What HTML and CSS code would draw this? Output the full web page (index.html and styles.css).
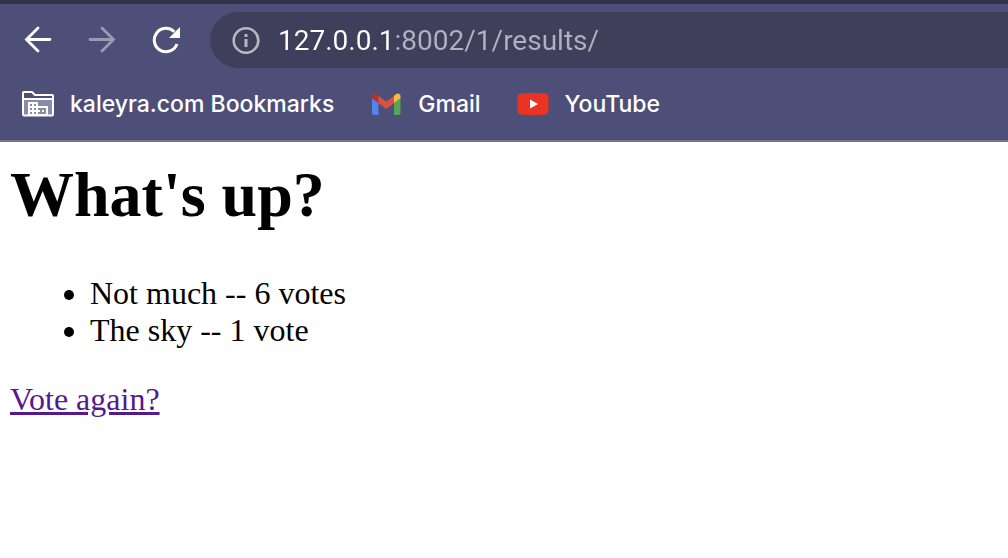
FILE: index.html
```html
<!DOCTYPE html>
<html lang="en">
<head>
<meta charset="utf-8">
<meta name="viewport" content="width=device-width, initial-scale=1">
<title>What's up?</title>
<link rel="stylesheet" href="styles.css">
</head>
<body>
<header class="browser">
  <div class="toolbar">
    <button class="nav-button" type="button" aria-label="Back">
      <svg width="28" height="28" viewBox="0 0 28 28" fill="none" stroke="currentColor" stroke-width="2.800" stroke-linecap="round"><path d="M26 13.500H3M14 2L2.500 13.500L14 25"/></svg>
    </button>
    <button class="nav-button" type="button" aria-label="Forward" disabled>
      <svg width="28" height="28" viewBox="0 0 28 28" fill="none" stroke="currentColor" stroke-width="2.800" stroke-linecap="round"><path d="M2 13.500H25M14 2L25.500 13.500L14 25"/></svg>
    </button>
    <button class="nav-button" type="button" aria-label="Reload">
      <svg width="28" height="28" viewBox="0 0 28 28" fill="none"><path d="M25 18A11.700 11.700 0 1 1 22.300 5.800" stroke="currentColor" stroke-width="3"/><path d="M28 1V12H17Z" fill="currentColor"/></svg>
    </button>
    <div class="address">
      <button class="site-info" type="button" aria-label="View site information">
        <svg width="28" height="28" viewBox="0 0 28 28" fill="none"><circle cx="14" cy="14.500" r="12.300" stroke="currentColor" stroke-width="2.600"/><path d="M12.500 8h3v3h-3zM12.500 13h3v8h-3z" fill="currentColor"/></svg>
      </button>
      <input class="url" type="text" aria-label="Address" value="127.0.0.1:8002/1/results/" spellcheck="false">
    </div>
  </div>
  <nav class="bookmarks" aria-label="Bookmarks">
    <button class="bookmark" type="button">
      <svg class="bookmark-icon" width="32" height="26" viewBox="0 0 32 26"><path d="M2 8H30V24H2Z" fill="#8a8aab"/><path d="M1 2Q1 1 2 1H10L13 4H30Q31 4 31 5V23Q31 24.500 30 24.500H2Q1 24.500 1 23ZM1 8H31" fill="none" stroke="#fff" stroke-width="2"/><path fill="#fff" fill-rule="evenodd" d="M6 11H16V15H26V25H6ZM8 13V15H10V13ZM12 13V15H14V13ZM8 17V19H10V17ZM12 17V19H14V17ZM8 21V23H10V21ZM12 21V23H14V21ZM16 17V19H18V21H16V23H24V17ZM20 19H22V21H20Z"/></svg>
      <span>kaleyra.com Bookmarks</span>
    </button>
    <a class="bookmark" href="#gmail">
      <svg class="bookmark-icon" width="32" height="26" viewBox="0 0 32 26"><path d="M2 7L8.500 11.500V24H4Q2 24 2 22Z" fill="#5184ef"/><path d="M24 11.500L30.500 7V22Q30.500 24 28.500 24H24Z" fill="#55a457"/><path d="M8 4.500L16.250 10.800L24.500 4.500V11.700L16.250 18L8 11.700Z" fill="#d95140"/><path d="M2 7V5C2 2.500 5 1.500 7 3.500L8.500 4.700V12L2 7.200Z" fill="#b3342b"/><path d="M30.500 7V5C30.500 2.500 27.500 1.500 25.500 3.500L24 4.700V12L30.500 7.200Z" fill="#f2bd42"/></svg>
      <span>Gmail</span>
    </a>
    <a class="bookmark" href="#youtube">
      <svg class="bookmark-icon" width="32" height="26" viewBox="0 0 32 26"><path d="M4 2.500Q16 1 28 2.500Q31 2.800 31.400 6Q32 13 31.400 20Q31 23.200 28 23.500Q16 25 4 23.500Q1 23.200.6 20Q0 13 .6 6Q1 2.800 4 2.500Z" fill="#e93323"/><path d="M13 8.500L21 13L13 17.500Z" fill="#fff"/></svg>
      <span>YouTube</span>
    </a>
  </nav>
</header>
<main class="page">
  <h1 class="question">What's up?</h1>
  <ul class="choices">
    <li>Not much -- 6 votes</li>
    <li>The sky -- 1 vote</li>
  </ul>
  <a class="vote-link" href="#vote">Vote again?</a>
</main>
</body>
</html>
```
FILE: styles.css
```css
* {
  box-sizing: border-box;
}

body {
  margin: 0;
  background: #fff;
  color: #000;
}

.browser {
  padding-top: 8px;
  border-top: 4px solid #32324a;
  border-bottom: 2px solid #757292;
  background: #4e4f78;
  color: #fff;
  font-family: Inter, "Liberation Sans", sans-serif;
}

.toolbar {
  display: flex;
  align-items: center;
  gap: 36px;
  padding-left: 24px;
}

button {
  padding: 0;
  border: 0;
  background: none;
  color: inherit;
  font: inherit;
}

svg {
  display: block;
  flex: none;
}

.nav-button:disabled {
  color: #9b99b5;
}

.address {
  display: flex;
  flex: 1;
  align-items: center;
  gap: 18px;
  height: 56px;
  margin-left: -6px;
  padding-left: 22px;
  border-radius: 28px 0 0 28px;
  background: #3f3f5c;
}

.site-info {
  color: #b5b8bd;
}

.url {
  flex: 1;
  min-width: 0;
  height: 40px;
  padding: 0;
  border: 0;
  outline: 0;
  background: linear-gradient(to right, #fff 117px, #b2b2be 117px);
  background-clip: text;
  -webkit-background-clip: text;
  -webkit-text-fill-color: transparent;
  color: #fff;
  font-family: Roboto, "Liberation Sans", sans-serif;
  font-size: 28px;
}

.bookmarks {
  display: flex;
  align-items: center;
  gap: 36px;
  padding: 16px 22px;
}

.bookmark {
  display: flex;
  align-items: center;
  gap: 16px;
  color: #fff;
  font-size: 23px;
  font-weight: 500;
  line-height: 40px;
  text-decoration: none;
  white-space: nowrap;
}

.page {
  padding: 16px 10px;
  font-family: "Liberation Serif", "Times New Roman", serif;
  font-size: 32px;
  line-height: 37px;
}

.question {
  margin: 0 0 43px;
  font-size: 64px;
  line-height: 74px;
}

.choices {
  margin: 0 0 32px;
  padding-left: 80px;
}

.vote-link {
  color: #551a8b;
}
```
